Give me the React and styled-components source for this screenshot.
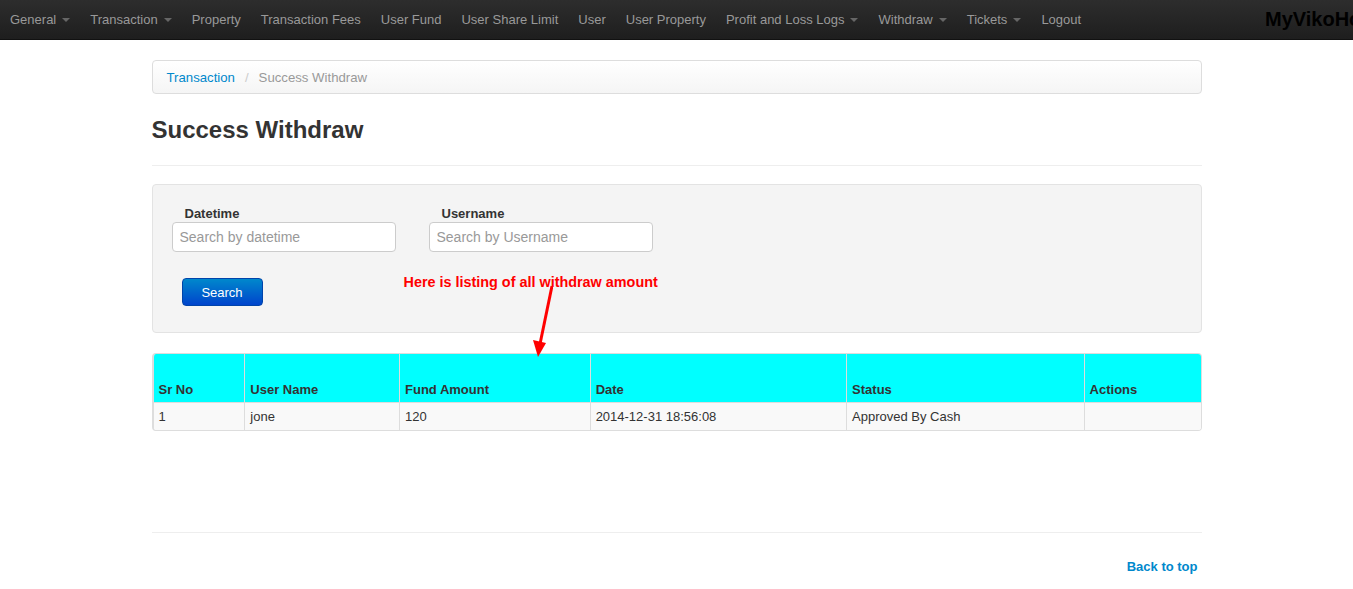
import styled, { createGlobalStyle } from "styled-components";

const GlobalStyle = createGlobalStyle`
  body {
    margin: 0;
    font-family: "Liberation Sans", Arial, sans-serif;
    font-size: 13px;
    color: #333;
    background: #fff;
  }
`;

const Navbar = styled.div`
  height: 40px;
  display: flex;
  align-items: center;
  background: linear-gradient(#2d2d2d, #1e1e1e);
  border-bottom: 1px solid #111;
  box-sizing: border-box;
  overflow: hidden;
`;

const NavList = styled.ul`
  display: flex;
  margin: 0;
  padding: 0;
  list-style: none;
  flex: none;
`;

const NavItem = styled.li`
  display: flex;
  align-items: center;
  padding: 0 10px;
  color: #999;
  font-size: 13px;
  white-space: nowrap;
`;

const Caret = styled.span`
  display: inline-block;
  width: 0;
  height: 0;
  margin-left: 6px;
  margin-top: 1px;
  border-left: 4px solid transparent;
  border-right: 4px solid transparent;
  border-top: 4px solid #666;
`;

const Brand = styled.div`
  margin-left: auto;
  width: 88px;
  flex: none;
  overflow: hidden;
  white-space: nowrap;
  font-size: 20px;
  font-weight: bold;
  color: #000;
`;

const Container = styled.div`
  width: 1050px;
  margin: 0 auto;
  position: relative;
`;

const Breadcrumb = styled.ul`
  display: flex;
  align-items: center;
  margin: 20px 0 0;
  padding: 0 14px;
  height: 34px;
  box-sizing: border-box;
  list-style: none;
  border: 1px solid #ddd;
  border-radius: 4px;
  background: linear-gradient(#fff, #f5f5f5);
  font-size: 13.2px;
`;

const Crumb = styled.li`
  color: ${(p) => (p.$active ? "#999" : "#0088cc")};
`;

const Divider = styled.span`
  color: #ccc;
  padding: 0 10px 0 10px;
`;

const Title = styled.h1`
  margin: 21px 0 0;
  font-size: 24px;
  line-height: 30px;
  font-weight: bold;
  color: #333;
`;

const Rule = styled.hr`
  margin: ${(p) => p.$margin};
  border: 0;
  border-top: 1px solid #eee;
`;

const Well = styled.div`
  height: 149px;
  box-sizing: border-box;
  padding: 20px 19px;
  background: #f4f4f4;
  border: 1px solid #e3e3e3;
  border-radius: 4px;
`;

const FieldRow = styled.div`
  display: flex;
  gap: 33px;
`;

const Field = styled.div`
  display: flex;
  flex-direction: column;
`;

const Label = styled.label`
  font-weight: bold;
  font-size: 13px;
  line-height: 16px;
  margin: 1px 0 0 13px;
`;

const Input = styled.input`
  width: 224px;
  height: 30px;
  box-sizing: border-box;
  padding: 4px 7px;
  font-family: "Liberation Sans", Arial, sans-serif;
  font-size: 14px;
  border: 1px solid #ccc;
  border-radius: 4px;
  background: #fff;
  &::placeholder {
    color: #999;
  }
`;

const Button = styled.button`
  margin: 26px 0 0 10px;
  width: 81px;
  height: 28px;
  font-family: "Liberation Sans", Arial, sans-serif;
  font-size: 13px;
  color: #fff;
  border: 1px solid #0044aa;
  border-radius: 4px;
  background: linear-gradient(#0088cc, #0044cc);
`;

const Note = styled.div`
  position: absolute;
  left: 252px;
  top: 214px;
  color: #ff0000;
  font-weight: bold;
  font-size: 14.4px;
  white-space: nowrap;
`;

const Arrow = styled.svg`
  position: absolute;
  left: 377px;
  top: 224px;
`;

const Table = styled.table`
  margin-top: 20px;
  width: 100%;
  border-collapse: separate;
  border-spacing: 0;
  border: 1px solid #ddd;
  border-left-width: 2px;
  border-radius: 4px;
  overflow: hidden;
`;

const Th = styled.th`
  height: 48px;
  box-sizing: border-box;
  padding: 4px 5px 5px;
  vertical-align: bottom;
  text-align: left;
  font-size: 13px;
  font-weight: bold;
  color: #333;
  background: #00ffff;
  border-left: 1px solid #ddd;
  width: ${(p) => p.$w}px;
  &:first-child {
    border-left: 0;
  }
`;

const Td = styled.td`
  height: 27px;
  padding: 0 5px;
  font-size: 13px;
  color: #333;
  background: #f9f9f9;
  border-left: 1px solid #ddd;
  border-top: 1px solid #ddd;
  &:first-child {
    border-left: 0;
  }
`;

const Footer = styled.div`
  display: flex;
  justify-content: flex-end;
  padding: 26px 4px 0 0;
`;

const TopLink = styled.a`
  color: #0088cc;
  font-weight: bold;
  text-decoration: none;
`;

const navItems = [
  ["General", true],
  ["Transaction", true],
  ["Property"],
  ["Transaction Fees"],
  ["User Fund"],
  ["User Share Limit"],
  ["User"],
  ["User Property"],
  ["Profit and Loss Logs", true],
  ["Withdraw", true],
  ["Tickets", true],
  ["Logout"],
];

const columns = [
  ["Sr No", 91],
  ["User Name", 155],
  ["Fund Amount", 191],
  ["Date", 257],
  ["Status", 238],
  ["Actions", 117],
];

const rows = [["1", "jone", "120", "2014-12-31 18:56:08", "Approved By Cash", ""]];

export default function App() {
  return (
    <>
      <GlobalStyle />
      <Navbar>
        <NavList>
          {navItems.map(([label, drop]) => (
            <NavItem key={label}>
              {label}
              {drop && <Caret />}
            </NavItem>
          ))}
        </NavList>
        <Brand>MyVikoHome</Brand>
      </Navbar>
      <Container>
        <Breadcrumb>
          <Crumb>Transaction</Crumb>
          <Divider>/</Divider>
          <Crumb $active>Success Withdraw</Crumb>
        </Breadcrumb>
        <Title>Success Withdraw</Title>
        <Rule $margin="20px 0 18px" />
        <Well>
          <FieldRow>
            <Field>
              <Label>Datetime</Label>
              <Input placeholder="Search by datetime" />
            </Field>
            <Field>
              <Label>Username</Label>
              <Input placeholder="Search by Username" />
            </Field>
          </FieldRow>
          <Button>Search</Button>
        </Well>
        <Note>Here is listing of all withdraw amount</Note>
        <Arrow width="24" height="74" viewBox="0 0 24 74">
          <line x1="23" y1="2" x2="11" y2="60" stroke="#ff0000" strokeWidth="3" />
          <polygon points="4,56 17,59 9,73" fill="#ff0000" />
        </Arrow>
        <Table>
          <thead>
            <tr>
              {columns.map(([c, w]) => (
                <Th key={c} $w={w}>
                  {c}
                </Th>
              ))}
            </tr>
          </thead>
          <tbody>
            {rows.map((r, i) => (
              <tr key={i}>
                {r.map((cell, j) => (
                  <Td key={j}>{cell}</Td>
                ))}
              </tr>
            ))}
          </tbody>
        </Table>
        <Rule $margin="101px 0 0" />
        <Footer>
          <TopLink href="#">Back to top</TopLink>
        </Footer>
      </Container>
    </>
  );
}
